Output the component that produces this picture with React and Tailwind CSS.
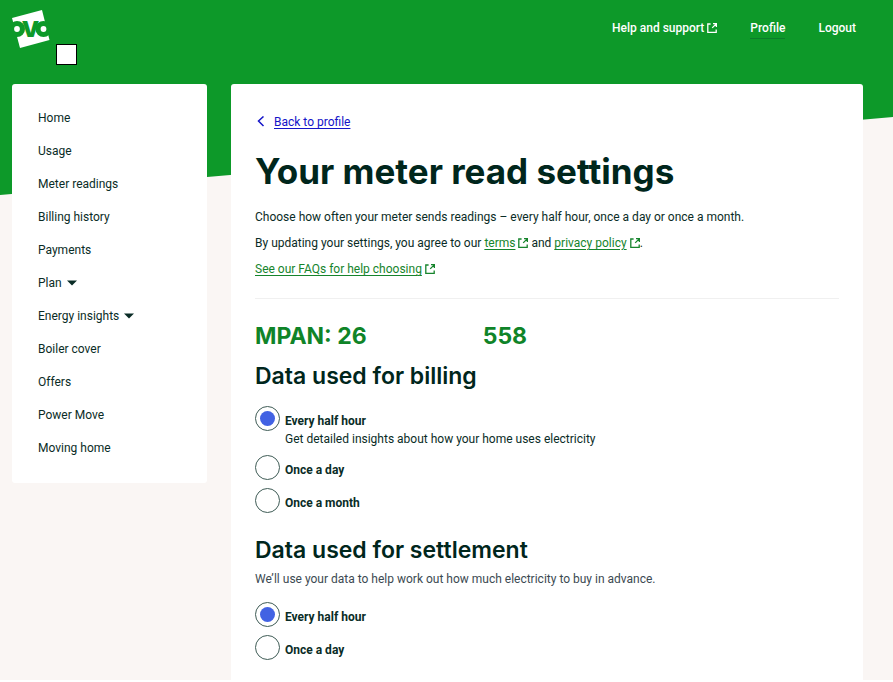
import React, { useState } from "react";

const menu = [
  { label: "Home" },
  { label: "Usage" },
  { label: "Meter readings" },
  { label: "Billing history" },
  { label: "Payments" },
  { label: "Plan", dropdown: true },
  { label: "Energy insights", dropdown: true },
  { label: "Boiler cover" },
  { label: "Offers" },
  { label: "Power Move" },
  { label: "Moving home" },
];

const billingOptions = [
  {
    value: "half-hour",
    label: "Every half hour",
    hint: "Get detailed insights about how your home uses electricity",
  },
  { value: "day", label: "Once a day" },
  { value: "month", label: "Once a month" },
];

const settlementOptions = [
  { value: "half-hour", label: "Every half hour" },
  { value: "day", label: "Once a day" },
];

const Logo = () => (
  <svg width="38" height="38" viewBox="0 0 38 38" aria-hidden="true">
    <path d="M0 8 30 0 37.5 30 8 38Z" fill="#fff" />
    <circle cx="5" cy="19" r="8" fill="#0d9929" />
    <circle cx="31.5" cy="19" r="8" fill="#0d9929" />
    <text
      x="18.5"
      y="27"
      textAnchor="middle"
      fontSize="22"
      fontWeight="900"
      fontFamily="Inter, sans-serif"
      fill="#0d9929"
    >
      V
    </text>
    <circle cx="5" cy="19" r="2.9" fill="#fff" />
    <circle cx="31.5" cy="19" r="2.9" fill="#fff" />
  </svg>
);

const ExternalIcon = () => (
  <svg
    className="inline-block ml-[3px] align-[-1px]"
    width="10"
    height="10"
    viewBox="0 0 10 10"
    fill="none"
    stroke="currentColor"
    strokeWidth="1.3"
    aria-hidden="true"
  >
    <path d="M3.6 1H.8v8.3h8.4V6.4" />
    <path d="M6 .7h3.4v3.4M9.2.9 5.2 4.9" />
  </svg>
);

const ExternalLink = ({ children }) => (
  <a href="#" className="text-[#16842c]">
    <span className="underline underline-offset-2">{children}</span>
    <ExternalIcon />
  </a>
);

const RadioGroup = ({ name, title, options }) => {
  const [selected, setSelected] = useState("half-hour");

  return (
    <div className="flex flex-col gap-2" role="radiogroup" aria-label={title}>
      {options.map((option) => (
        <label key={option.value} className="flex items-start gap-[5px]">
          <input
            type="radio"
            name={name}
            value={option.value}
            checked={selected === option.value}
            onChange={() => setSelected(option.value)}
            className="appearance-none shrink-0 size-[25px] p-1 rounded-full border border-[#3f5c56] bg-clip-content checked:bg-[#4262e3]"
          />
          <span className="pt-[5px]">
            <span className="block font-bold leading-5">{option.label}</span>
            {option.hint && (
              <span className="block leading-4">{option.hint}</span>
            )}
          </span>
        </label>
      ))}
    </div>
  );
};

const Header = () => (
  <header className="h-[84px] flex items-start justify-between pl-3 pr-[37px]">
    <div className="flex items-end gap-[6px] pt-[10px]">
      <a href="#" aria-label="OVO" className="mb-[17px]">
        <Logo />
      </a>
      <div className="size-[21px] bg-white border border-black"></div>
    </div>
    <nav className="flex gap-[33px] pt-[18px] font-medium text-white leading-5">
      <a href="#">
        Help and support
        <ExternalIcon />
      </a>
      <a href="#" className="border-b border-[#0b7d2b]">
        Profile
      </a>
      <a href="#">Logout</a>
    </nav>
  </header>
);

const Sidebar = () => (
  <nav className="w-[195px] shrink-0 self-start rounded-[3px] bg-white px-[26px] pt-[17px] pb-[19px]">
    <ul>
      {menu.map((item) => (
        <li key={item.label} className="h-[33px] flex items-center">
          {item.dropdown ? (
            <button type="button" className="flex items-center gap-[5px]">
              {item.label}
              <svg width="10" height="6" viewBox="0 0 10 6" aria-hidden="true">
                <path d="M0 .5h10L5 5.5Z" fill="currentColor" />
              </svg>
            </button>
          ) : (
            <a href="#">{item.label}</a>
          )}
        </li>
      ))}
    </ul>
  </nav>
);

export default function App() {
  return (
    <div className="grid font-[Roboto,sans-serif] text-[12px] text-[#0a2c26] bg-[#faf6f4]">
      {/* slanted green backdrop */}
      <div className="col-start-1 row-start-1 h-[195px] bg-[#0d9929] [clip-path:polygon(0_0,100%_0,100%_60%,0_100%)]"></div>

      <div className="col-start-1 row-start-1 relative">
        <Header />
        <div className="flex gap-6 pl-3 pr-[30px]">
          <Sidebar />
          <main className="flex-1 min-w-0 rounded-t-[3px] bg-white px-6 pt-7 pb-5">
            <a
              href="#"
              className="inline-flex items-center gap-[9px] pl-[2px] leading-5 text-[#1414c8]"
            >
              <svg
                width="8"
                height="12"
                viewBox="0 0 8 12"
                fill="none"
                stroke="currentColor"
                strokeWidth="1.5"
                aria-hidden="true"
              >
                <path d="M6.5 .5 1.5 5l5 5" />
              </svg>
              <span className="underline underline-offset-2">
                Back to profile
              </span>
            </a>
            <h1 className="mt-[18px] font-[Inter,sans-serif] text-[35px] leading-10 font-bold text-[#00261c]">
              Your meter read settings
            </h1>
            <div className="mt-4 flex flex-col gap-[6px] leading-5">
              <p>
                Choose how often your meter sends readings – every half hour,
                once a day or once a month.
              </p>
              <p>
                By updating your settings, you agree to our{" "}
                <ExternalLink>terms</ExternalLink> and{" "}
                <ExternalLink>privacy policy</ExternalLink>.
              </p>
              <p>
                <ExternalLink>See our FAQs for help choosing</ExternalLink>
              </p>
            </div>
            <hr className="mt-[19px] border-[#f0f0f0]" />

            <section className="font-[Inter,sans-serif] text-[23px] leading-8">
              <h2 className="mt-[21px] flex gap-[116px] font-bold text-[#0f8428]">
                <span>MPAN: 26</span>
                <span>558</span>
              </h2>
              <h3 className="mt-2 font-semibold text-[#00261c]">
                Data used for billing
              </h3>
            </section>
            <div className="mt-[14px]">
              <RadioGroup
                name="billing"
                title="Data used for billing"
                options={billingOptions}
              />
            </div>

            <h3 className="mt-[21px] font-[Inter,sans-serif] text-[23px] leading-8 font-semibold text-[#00261c]">
              Data used for settlement
            </h3>
            <p className="mt-[3px] mb-[13px] leading-5 text-[#3c4a52]">
              We’ll use your data to help work out how much electricity to buy
              in advance.
            </p>
            <RadioGroup
              name="settlement"
              title="Data used for settlement"
              options={settlementOptions}
            />
          </main>
        </div>
      </div>
    </div>
  );
}
